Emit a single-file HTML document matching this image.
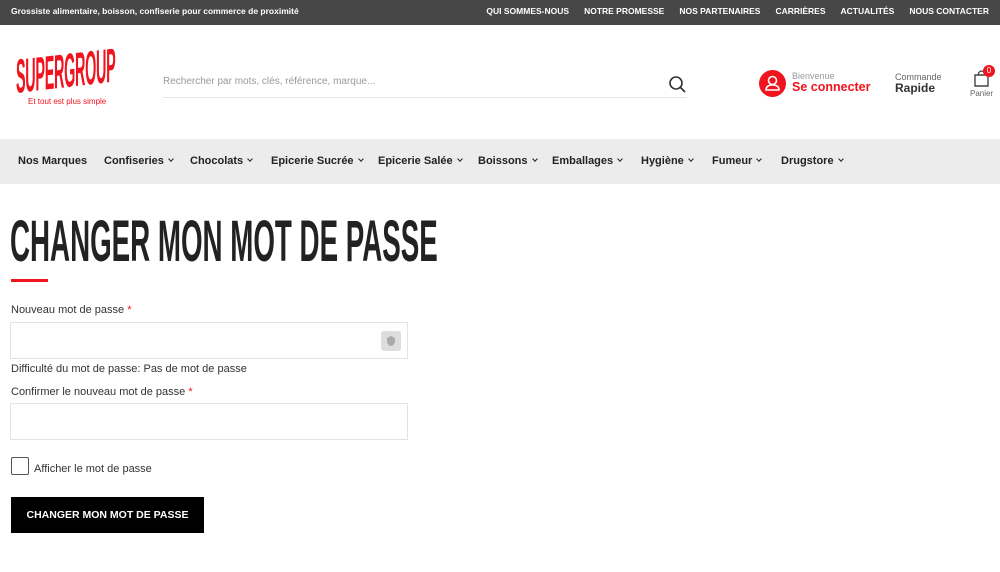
<!DOCTYPE html>
<html><head><meta charset="utf-8"><style>
*{margin:0;padding:0;box-sizing:border-box}
body{width:1000px;height:572px;background:#fff;font-family:"Liberation Sans",sans-serif;color:#222;position:relative;overflow:hidden}
.top{height:25px;background:#474747;color:#fff;font-size:8.5px;font-weight:bold;position:relative}
.top .l{position:absolute;left:11px;top:6px}
.top .r{position:absolute;right:11px;top:6px;display:flex;gap:15px}
.abs{position:absolute}
.nav{position:absolute;top:139px;left:0;width:1000px;height:45px;background:#ececec;font-size:11px;font-weight:bold;color:#222}
.nav span{position:absolute;top:16px}
.caret{display:inline-block;width:4px;height:4px;border-right:1.5px solid #222;border-bottom:1.5px solid #222;transform:rotate(45deg);margin-left:5px;position:relative;top:-3px}
h1{position:absolute;left:10px;top:212px;font-family:"Liberation Sans",sans-serif;font-weight:bold;font-size:58px;color:#222;transform:scaleX(0.478);transform-origin:left;white-space:nowrap;line-height:60px}
.lbl{position:absolute;left:11px;font-size:11px;color:#333}
.inp{position:absolute;left:10px;width:398px;height:37px;border:1px solid #e3e3e3}
</style></head><body>
<div class="top"><div class="l">Grossiste alimentaire, boisson, confiserie pour commerce de proximité</div>
<div class="r"><span>QUI SOMMES-NOUS</span><span>NOTRE PROMESSE</span><span>NOS PARTENAIRES</span><span>CARRIÈRES</span><span>ACTUALITÉS</span><span>NOUS CONTACTER</span></div></div>

<div class="abs" style="left:16px;top:56px;font-family:'Liberation Sans',sans-serif;font-weight:bold;font-size:48px;color:#f0141e;letter-spacing:-1px;transform:scaleX(0.3) skewY(-2deg);transform-origin:left;line-height:44px;white-space:nowrap">SUPERGROUP</div>
<div class="abs" style="left:28px;top:97px;font-size:8px;color:#f0141e">Et tout est plus simple</div>

<div class="abs" style="left:163px;top:76px;font-size:10px;color:#999">Rechercher par mots, clés, référence, marque...</div>
<div class="abs" style="left:163px;top:97px;width:524px;height:1px;background:#e6e6e6"></div>
<svg class="abs" style="left:668px;top:75px" width="19" height="19" viewBox="0 0 19 19"><circle cx="8" cy="8" r="6" fill="none" stroke="#333" stroke-width="1.6"/><line x1="12.5" y1="12.5" x2="17" y2="17" stroke="#333" stroke-width="1.8"/></svg>

<div class="abs" style="left:759px;top:70px;width:27px;height:27px;border-radius:50%;background:#f0141e"></div>
<svg class="abs" style="left:759px;top:70px" width="27" height="27" viewBox="0 0 27 27"><circle cx="13.5" cy="10.5" r="4" fill="none" stroke="#fff" stroke-width="1.6"/><path d="M7 20 Q7 15 13.5 15 Q20 15 20 20 Z" fill="none" stroke="#fff" stroke-width="1.6"/></svg>
<div class="abs" style="left:792px;top:71px;font-size:9px;color:#999">Bienvenue</div>
<div class="abs" style="left:792px;top:80px;font-size:12.5px;font-weight:bold;color:#f0141e">Se connecter</div>
<div class="abs" style="left:895px;top:72px;font-size:9px;color:#666">Commande</div>
<div class="abs" style="left:895px;top:81px;font-size:12px;font-weight:bold;color:#333">Rapide</div>
<svg class="abs" style="left:972px;top:68px" width="20" height="20" viewBox="0 0 20 20"><path d="M3 7 H16 V18 H3 Z" fill="none" stroke="#444" stroke-width="1.4"/><path d="M6.5 7 V5 Q9.5 1 12.5 5 V7" fill="none" stroke="#444" stroke-width="1.3"/></svg>
<div class="abs" style="left:983px;top:65px;width:12px;height:12px;border-radius:50%;background:#f0141e;color:#fff;font-size:8px;text-align:center;line-height:12px">0</div>
<div class="abs" style="left:970px;top:89px;font-size:8px;color:#666">Panier</div>

<div class="nav">
<span style="left:18px">Nos Marques</span>
<span style="left:104px">Confiseries<i class="caret"></i></span>
<span style="left:190px">Chocolats<i class="caret"></i></span>
<span style="left:271px">Epicerie Sucrée<i class="caret"></i></span>
<span style="left:378px">Epicerie Salée<i class="caret"></i></span>
<span style="left:478px">Boissons<i class="caret"></i></span>
<span style="left:552px">Emballages<i class="caret"></i></span>
<span style="left:641px">Hygiène<i class="caret"></i></span>
<span style="left:712px">Fumeur<i class="caret"></i></span>
<span style="left:781px">Drugstore<i class="caret"></i></span>
</div>

<h1>CHANGER MON MOT DE PASSE</h1>
<div class="abs" style="left:11px;top:279px;width:37px;height:3px;background:#f0141e"></div>

<div class="lbl" style="top:304px">Nouveau mot de passe <span style="color:#f0141e">*</span></div>
<div class="inp" style="top:322px"></div>
<div class="abs" style="left:381px;top:331px;width:20px;height:20px;border-radius:3px;background:#ddd"></div>
<svg class="abs" style="left:385px;top:335px" width="12" height="12" viewBox="0 0 12 12"><path d="M6 1 L10 3 V6 Q10 10 6 11 Q2 10 2 6 V3 Z" fill="#aaa"/></svg>
<div class="lbl" style="top:363px">Difficulté du mot de passe: Pas de mot de passe</div>
<div class="lbl" style="top:386px">Confirmer le nouveau mot de passe <span style="color:#f0141e">*</span></div>
<div class="inp" style="top:403px"></div>
<div class="abs" style="left:11px;top:457px;width:18px;height:18px;border:1px solid #555;border-radius:2px"></div>
<div class="lbl" style="left:34px;top:463px">Afficher le mot de passe</div>
<div class="abs" style="left:11px;top:497px;width:193px;height:36px;background:#000;color:#fff;font-size:10.5px;font-weight:bold;text-align:center;line-height:36px">CHANGER MON MOT DE PASSE</div>
</body></html>
